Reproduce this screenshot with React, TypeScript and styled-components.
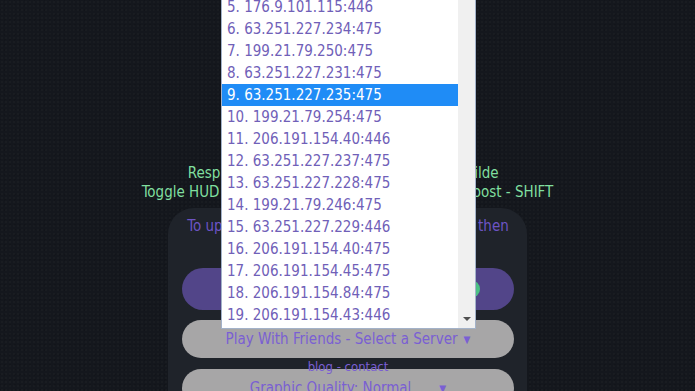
import React, { useLayoutEffect, useRef } from "react";
import styled, { createGlobalStyle } from "styled-components";

const Global = createGlobalStyle`
  html, body { margin: 0; padding: 0; }
  body {
    background-color: #14171d;
    background-image:
      radial-gradient(rgba(255,255,255,0.018) 1px, transparent 1px),
      radial-gradient(rgba(0,0,0,0.12) 1px, transparent 1px);
    background-size: 4px 4px, 5px 5px;
    background-position: 0 0, 2px 2px;
    font-family: "DejaVu Sans Condensed", "DejaVu Sans", sans-serif;
    overflow: hidden;
  }
`;

const Page = styled.div`
  position: relative;
  width: 695px;
  height: 391px;
  overflow: hidden;
  display: flex;
  flex-direction: column;
  align-items: center;
  padding-top: 164px;
  box-sizing: border-box;
`;

const Controls = styled.div`
  color: #80df9f;
  font-size: 15px;
  line-height: 19px;
  text-align: center;
  white-space: pre;
`;

const Panel = styled.div`
  margin-top: 6px;
  width: 359px;
  box-sizing: border-box;
  background: #1f232a;
  border-radius: 26px;
  padding: 9px 13px 20px 14px;
  display: flex;
  flex-direction: column;
  align-items: stretch;
`;

const Notice = styled.div`
  color: #6d54c4;
  font-size: 15px;
  line-height: 19px;
  text-align: center;
  white-space: nowrap;
  margin-bottom: 32px;
`;

const Pill = styled.div<{ $variant: "primary" | "muted" }>`
  height: ${(p) => (p.$variant === "primary" ? 42 : 38)}px;
  border-radius: 21px;
  background: ${(p) => (p.$variant === "primary" ? "#524589" : "#a7a6a7")};
  color: ${(p) => (p.$variant === "primary" ? "#ffffff" : "#7a5fd3")};
  font-weight: ${(p) => (p.$variant === "primary" ? 700 : 400)};
  font-size: 15px;
  display: flex;
  align-items: center;
  justify-content: center;
  position: relative;
  margin-bottom: 10px;
`;

const SelectRow = styled.span<{ $gap: number }>`
  display: flex;
  align-items: center;
  gap: ${(p) => p.$gap}px;
`;

const Caret = styled.span`
  font-size: 10px;
`;

const Dot = styled.span`
  position: absolute;
  right: 34px;
  top: 12px;
  width: 18px;
  height: 18px;
  border-radius: 50%;
  background: #4cc084;
`;

const Links = styled.div`
  position: relative;
  z-index: 1;
  color: #7a5fd3;
  font-size: 13px;
  line-height: 14px;
  text-align: center;
  margin: -8px 0 -5px;
`;

const Dropdown = styled.div`
  position: absolute;
  left: 221px;
  top: 0;
  width: 255px;
  height: 329px;
  box-sizing: border-box;
  border: 1px solid #a3b2c9;
  border-top: none;
  background: #ffffff;
  display: flex;
  z-index: 5;
`;

const OptionList = styled.ul`
  list-style: none;
  margin: 0;
  padding: 0;
  flex: 1;
  overflow: hidden;
`;

const Option = styled.li<{ $selected?: boolean }>`
  height: 22px;
  line-height: 22px;
  padding-left: 5px;
  font-size: 15px;
  color: ${(p) => (p.$selected ? "#ffffff" : "#7060b8")};
  background: ${(p) => (p.$selected ? "#1f8cf6" : "transparent")};
  white-space: nowrap;
`;

const Scrollbar = styled.div`
  width: 17px;
  background: #f0f0f0;
  display: flex;
  flex-direction: column;
  justify-content: flex-end;
  align-items: center;
  padding-bottom: 7px;
  box-sizing: border-box;
`;

const ArrowDown = styled.span`
  width: 0;
  height: 0;
  border-left: 4px solid transparent;
  border-right: 4px solid transparent;
  border-top: 4px solid #505050;
`;

const servers = [
  "206.191.154.41:475",
  "176.9.101.114:446",
  "63.251.227.230:475",
  "199.21.79.251:475",
  "176.9.101.115:446",
  "63.251.227.234:475",
  "199.21.79.250:475",
  "63.251.227.231:475",
  "63.251.227.235:475",
  "199.21.79.254:475",
  "206.191.154.40:446",
  "63.251.227.237:475",
  "63.251.227.228:475",
  "199.21.79.246:475",
  "63.251.227.229:446",
  "206.191.154.40:475",
  "206.191.154.45:475",
  "206.191.154.84:475",
  "206.191.154.43:446",
  "206.191.154.46:475",
  "63.251.227.236:446",
];

export default function App() {
  const listRef = useRef<HTMLUListElement>(null);
  useLayoutEffect(() => {
    if (listRef.current) listRef.current.scrollTop = 92;
  }, []);

  return (
    <Page>
      <Global />
      <Controls>
        {"Respawn - ENTER   |   Chat - T  |   Menu - Tilde  \nToggle HUD - H    |    Zoom - Mouse Wheel    |    Boost - SHIFT"}
      </Controls>
      <Panel>
        <Notice>To update the list of servers, refresh it and then</Notice>
        <Pill $variant="primary">
          1 Player Online - Quick Play
          <Dot />
        </Pill>
        <Pill $variant="muted">
          <SelectRow $gap={6}>
            Play With Friends - Select a Server <Caret>▼</Caret>
          </SelectRow>
        </Pill>
        <Links>blog - contact</Links>
        <Pill $variant="muted">
          <SelectRow $gap={28}>
            Graphic Quality: Normal <Caret>▼</Caret>
          </SelectRow>
        </Pill>
      </Panel>
      <Dropdown>
        <OptionList ref={listRef}>
          {servers.map((s, i) => (
            <Option key={i} $selected={i === 8}>
              {`${i + 1}. ${s}`}
            </Option>
          ))}
        </OptionList>
        <Scrollbar>
          <ArrowDown />
        </Scrollbar>
      </Dropdown>
    </Page>
  );
}
